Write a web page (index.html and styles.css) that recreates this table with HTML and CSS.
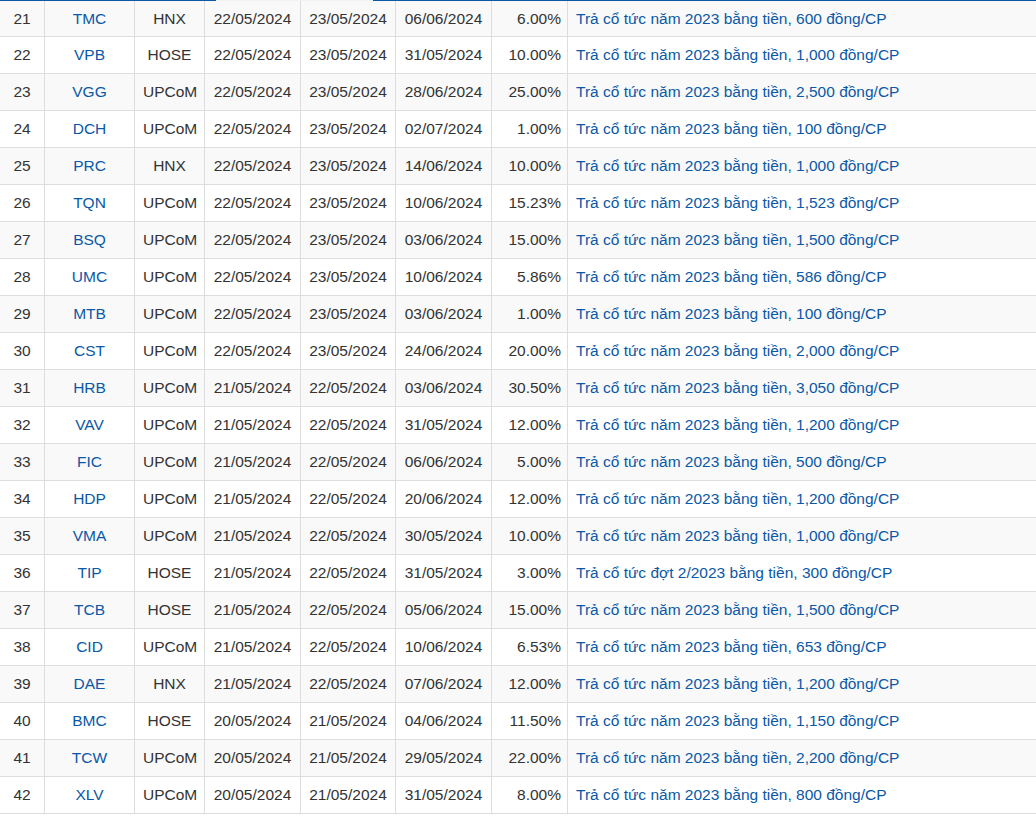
FILE: index.html
```html
<!DOCTYPE html>
<html lang="vi">
<head>
<meta charset="utf-8">
<title>Lịch trả cổ tức</title>
<link rel="stylesheet" href="styles.css">
</head>
<body>
<div class="topline"><span class="seg seg-a"></span><span class="seg seg-gap"></span><span class="seg seg-b"></span></div>
<table class="tbl">
<colgroup>
<col class="c-no"><col class="c-sym"><col class="c-ex"><col class="c-d"><col class="c-d2"><col class="c-d"><col class="c-pct"><col class="c-desc">
</colgroup>
<tbody>
<tr><td>21</td><td class="sym">TMC</td><td>HNX</td><td>22/05/2024</td><td>23/05/2024</td><td>06/06/2024</td><td class="pct">6.00%</td><td class="desc">Trả cổ tức năm 2023 bằng tiền, 600 đồng/CP</td></tr>
<tr><td>22</td><td class="sym">VPB</td><td>HOSE</td><td>22/05/2024</td><td>23/05/2024</td><td>31/05/2024</td><td class="pct">10.00%</td><td class="desc">Trả cổ tức năm 2023 bằng tiền, 1,000 đồng/CP</td></tr>
<tr><td>23</td><td class="sym">VGG</td><td>UPCoM</td><td>22/05/2024</td><td>23/05/2024</td><td>28/06/2024</td><td class="pct">25.00%</td><td class="desc">Trả cổ tức năm 2023 bằng tiền, 2,500 đồng/CP</td></tr>
<tr><td>24</td><td class="sym">DCH</td><td>UPCoM</td><td>22/05/2024</td><td>23/05/2024</td><td>02/07/2024</td><td class="pct">1.00%</td><td class="desc">Trả cổ tức năm 2023 bằng tiền, 100 đồng/CP</td></tr>
<tr><td>25</td><td class="sym">PRC</td><td>HNX</td><td>22/05/2024</td><td>23/05/2024</td><td>14/06/2024</td><td class="pct">10.00%</td><td class="desc">Trả cổ tức năm 2023 bằng tiền, 1,000 đồng/CP</td></tr>
<tr><td>26</td><td class="sym">TQN</td><td>UPCoM</td><td>22/05/2024</td><td>23/05/2024</td><td>10/06/2024</td><td class="pct">15.23%</td><td class="desc">Trả cổ tức năm 2023 bằng tiền, 1,523 đồng/CP</td></tr>
<tr><td>27</td><td class="sym">BSQ</td><td>UPCoM</td><td>22/05/2024</td><td>23/05/2024</td><td>03/06/2024</td><td class="pct">15.00%</td><td class="desc">Trả cổ tức năm 2023 bằng tiền, 1,500 đồng/CP</td></tr>
<tr><td>28</td><td class="sym">UMC</td><td>UPCoM</td><td>22/05/2024</td><td>23/05/2024</td><td>10/06/2024</td><td class="pct">5.86%</td><td class="desc">Trả cổ tức năm 2023 bằng tiền, 586 đồng/CP</td></tr>
<tr><td>29</td><td class="sym">MTB</td><td>UPCoM</td><td>22/05/2024</td><td>23/05/2024</td><td>03/06/2024</td><td class="pct">1.00%</td><td class="desc">Trả cổ tức năm 2023 bằng tiền, 100 đồng/CP</td></tr>
<tr><td>30</td><td class="sym">CST</td><td>UPCoM</td><td>22/05/2024</td><td>23/05/2024</td><td>24/06/2024</td><td class="pct">20.00%</td><td class="desc">Trả cổ tức năm 2023 bằng tiền, 2,000 đồng/CP</td></tr>
<tr><td>31</td><td class="sym">HRB</td><td>UPCoM</td><td>21/05/2024</td><td>22/05/2024</td><td>03/06/2024</td><td class="pct">30.50%</td><td class="desc">Trả cổ tức năm 2023 bằng tiền, 3,050 đồng/CP</td></tr>
<tr><td>32</td><td class="sym">VAV</td><td>UPCoM</td><td>21/05/2024</td><td>22/05/2024</td><td>31/05/2024</td><td class="pct">12.00%</td><td class="desc">Trả cổ tức năm 2023 bằng tiền, 1,200 đồng/CP</td></tr>
<tr><td>33</td><td class="sym">FIC</td><td>UPCoM</td><td>21/05/2024</td><td>22/05/2024</td><td>06/06/2024</td><td class="pct">5.00%</td><td class="desc">Trả cổ tức năm 2023 bằng tiền, 500 đồng/CP</td></tr>
<tr><td>34</td><td class="sym">HDP</td><td>UPCoM</td><td>21/05/2024</td><td>22/05/2024</td><td>20/06/2024</td><td class="pct">12.00%</td><td class="desc">Trả cổ tức năm 2023 bằng tiền, 1,200 đồng/CP</td></tr>
<tr><td>35</td><td class="sym">VMA</td><td>UPCoM</td><td>21/05/2024</td><td>22/05/2024</td><td>30/05/2024</td><td class="pct">10.00%</td><td class="desc">Trả cổ tức năm 2023 bằng tiền, 1,000 đồng/CP</td></tr>
<tr><td>36</td><td class="sym">TIP</td><td>HOSE</td><td>21/05/2024</td><td>22/05/2024</td><td>31/05/2024</td><td class="pct">3.00%</td><td class="desc">Trả cổ tức đợt 2/2023 bằng tiền, 300 đồng/CP</td></tr>
<tr><td>37</td><td class="sym">TCB</td><td>HOSE</td><td>21/05/2024</td><td>22/05/2024</td><td>05/06/2024</td><td class="pct">15.00%</td><td class="desc">Trả cổ tức năm 2023 bằng tiền, 1,500 đồng/CP</td></tr>
<tr><td>38</td><td class="sym">CID</td><td>UPCoM</td><td>21/05/2024</td><td>22/05/2024</td><td>10/06/2024</td><td class="pct">6.53%</td><td class="desc">Trả cổ tức năm 2023 bằng tiền, 653 đồng/CP</td></tr>
<tr><td>39</td><td class="sym">DAE</td><td>HNX</td><td>21/05/2024</td><td>22/05/2024</td><td>07/06/2024</td><td class="pct">12.00%</td><td class="desc">Trả cổ tức năm 2023 bằng tiền, 1,200 đồng/CP</td></tr>
<tr><td>40</td><td class="sym">BMC</td><td>HOSE</td><td>20/05/2024</td><td>21/05/2024</td><td>04/06/2024</td><td class="pct">11.50%</td><td class="desc">Trả cổ tức năm 2023 bằng tiền, 1,150 đồng/CP</td></tr>
<tr><td>41</td><td class="sym">TCW</td><td>UPCoM</td><td>20/05/2024</td><td>21/05/2024</td><td>29/05/2024</td><td class="pct">22.00%</td><td class="desc">Trả cổ tức năm 2023 bằng tiền, 2,200 đồng/CP</td></tr>
<tr><td>42</td><td class="sym">XLV</td><td>UPCoM</td><td>20/05/2024</td><td>21/05/2024</td><td>31/05/2024</td><td class="pct">8.00%</td><td class="desc">Trả cổ tức năm 2023 bằng tiền, 800 đồng/CP</td></tr>
</tbody>
</table>
</body>
</html>
```
FILE: styles.css
```css
html, body {
  margin: 0;
  padding: 0;
  background: #fff;
}
body {
  font-family: "Liberation Sans", Arial, sans-serif;
  font-size: 15.5px;
  color: #333;
  width: 1036px;
  overflow: hidden;
}
.topline {
  display: flex;
  height: 1px;
}
.seg { display: block; height: 1px; }
.seg-a { width: 216px; background: #0a58a6; }
.seg-gap { width: 157px; background: #f3f3f3; }
.seg-b { flex: 1; background: #0a58a6; }

.tbl {
  width: 1036px;
  table-layout: fixed;
  border-collapse: separate;
  border-spacing: 0;
}
.c-no { width: 45px; }
.c-sym { width: 90px; }
.c-ex { width: 70px; }
.c-d { width: 96px; }
.c-d2 { width: 95px; }
.c-pct { width: 76px; }
.c-desc { width: auto; }

.tbl td {
  height: 37px;
  padding: 0 8px;
  box-sizing: border-box;
  border-right: 1px solid #ddd;
  border-bottom: 1px solid #ddd;
  text-align: center;
  vertical-align: middle;
  white-space: nowrap;
  line-height: 20px;
}
.tbl tr:first-child td { height: 36px; }
.tbl td:last-child { border-right: none; }
.tbl tr:nth-child(odd) td { background: #f9f9f9; }
.tbl td.sym { color: #0a58a6; }
.tbl td.pct { text-align: right; padding-right: 6px; }
.tbl td.desc { text-align: left; color: #0a58a6; }
```
